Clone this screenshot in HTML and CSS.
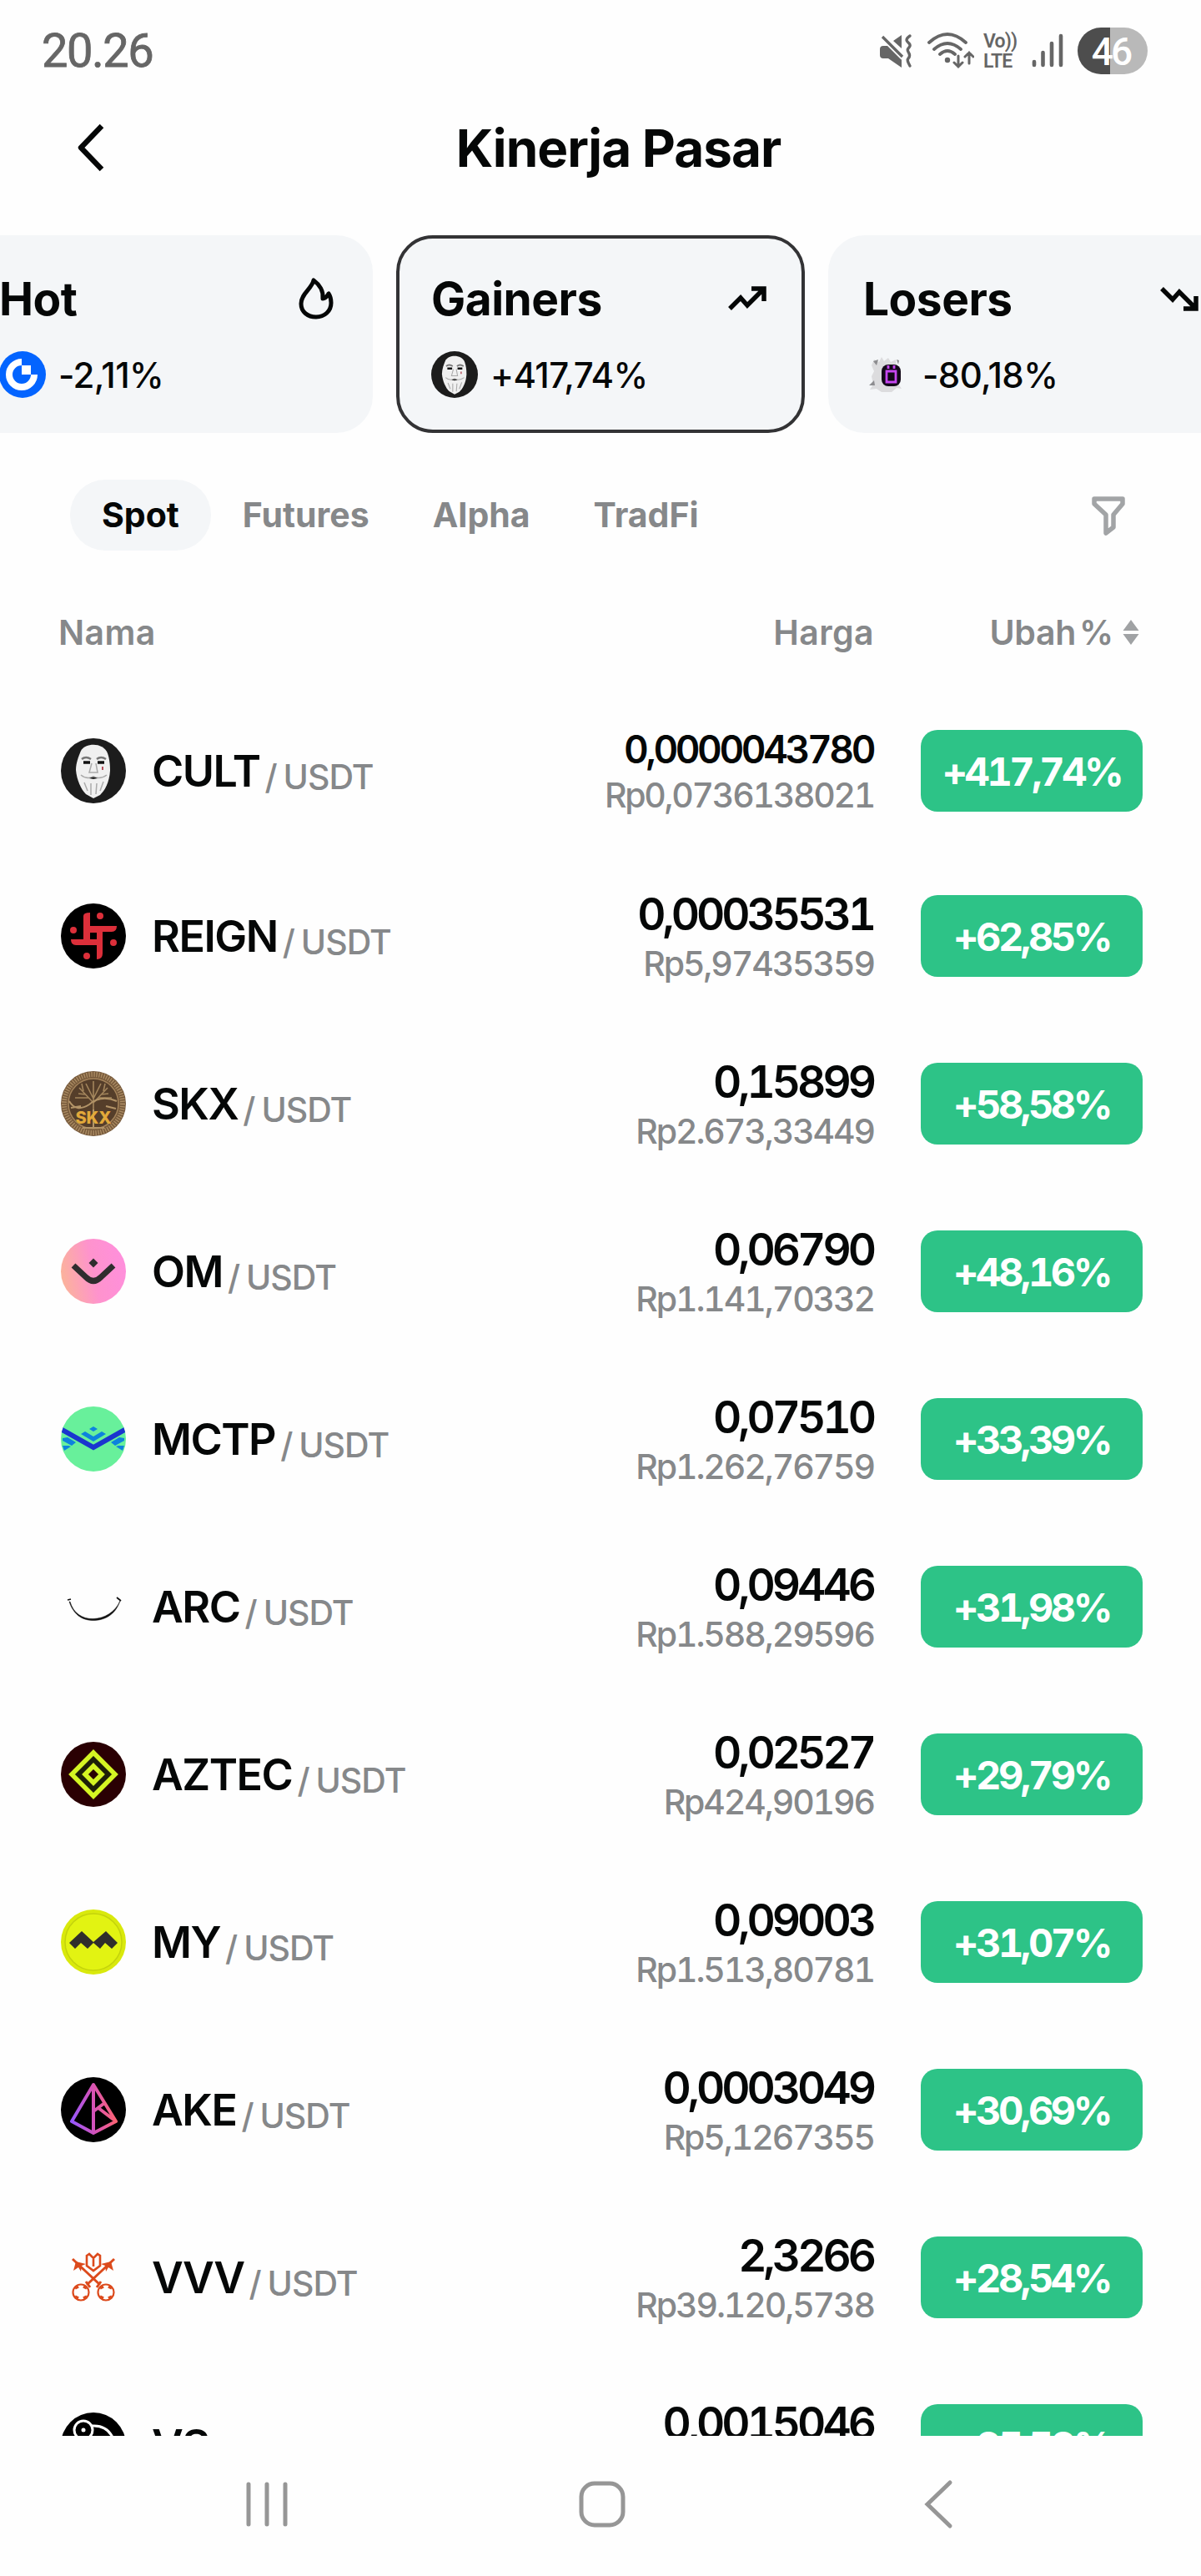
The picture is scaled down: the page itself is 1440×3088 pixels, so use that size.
FILE: index.html
```
<!DOCTYPE html>
<html lang="id">

<head>
    <meta charset="UTF-8">
    <meta name="viewport" content="width=device-width, initial-scale=1.0">
    <title>Kinerja Pasar</title>
    <link rel="stylesheet" href="styles.css">
</head>

<body>

    <!--* Status bar -->
    <div class="status-bar">
        <span class="time">20.26</span>
        <div class="status-icons">
            <svg class="icon-mute" width="42" height="42" viewBox="0 0 42 42" fill="none" stroke="#666" stroke-width="3.4" stroke-linecap="round">
                <path d="M2 19q0-4 4-4h6l16 14v12L12 30H6q-4 0-4-4zM18 9l10-7v16z" fill="#666" stroke="none" />
                <path d="M5 4l24 24" stroke="#fff" stroke-width="7" />
                <path d="M5 4l24 24" stroke-linecap="butt" />
                <path d="M38 3c-7 5-3 7-1 9s1 4-1 6 0 4 1 6 1 4-1 6 0 5 2 9" />
            </svg>
            <svg class="icon-wifi" width="56" height="44" viewBox="0 0 56 44" fill="none" stroke="#666" stroke-width="3.8" stroke-linecap="round">
                <path d="M2 12q22-20 44 0M8 20q16-14 32 0M15 26q9-8 18 0" />
                <circle cx="24" cy="33" r="3.2" fill="#666" stroke="none" />
                <path d="M37 28v13M32 36l5 5 5-5M50 37V24M45 29l5-5 5 5" stroke-width="3" />
            </svg>
            <div class="volte">
                <span>Vo))</span>
                <span>LTE</span>
            </div>
            <svg class="icon-signal" width="38" height="42" viewBox="0 0 38 42" stroke="#666" stroke-width="4.6" stroke-linecap="round">
                <path d="M3 34v4M13.500 23v15M24 12v26M35 3v35" />
            </svg>
            <div class="battery">46</div>
        </div>
    </div>

    <!--* Page header -->
    <header class="header">
        <svg class="back" width="36" height="60" viewBox="0 0 36 60" fill="none" stroke="#050707" stroke-width="6.400" stroke-linejoin="round">
            <path d="M32 3L7 29l25 26" />
        </svg>
        <h1>Kinerja Pasar</h1>
    </header>

    <!--* Category cards -->
    <section class="cards">
        <div class="card">
            <div class="card-head">
                <h2>Hot</h2>
                <svg class="flame" width="44" height="52" viewBox="0 0 44 52" fill="none" stroke="#050707" stroke-width="5" stroke-linejoin="round">
                    <path d="M19 4C17 14 4 20 4 32c0 10 8 16 18 16s18-7 18-17c0-5-1-8-3-11-2 3-3 6-7 6 1-9-4-17-11-22z" />
                </svg>
            </div>
            <div class="card-value">
                <svg width="56" height="56" viewBox="0 0 56 56">
                    <circle cx="28" cy="28" r="28" fill="#0364ff" />
                    <path d="M27 13a15 15 0 1 0 15 15" fill="none" stroke="#fff" stroke-width="8" />
                    <path d="M27 17h11v11H27z" fill="#fff" />
                </svg>
                <span>-2,11%</span>
            </div>
        </div>

        <div class="card active">
            <div class="card-head">
                <h2>Gainers</h2>
                <svg width="46" height="32" viewBox="0 0 46 32" fill="none" stroke="#050707" stroke-width="5.500">
                    <path d="M2 28l13-13 8 9L42 5M28 4h15v15" />
                </svg>
            </div>
            <div class="card-value">
                <svg width="56" height="56" viewBox="0 0 78 78">
                    <use href="#cult" />
                </svg>
                <span>+417,74%</span>
            </div>
        </div>

        <div class="card">
            <div class="card-head">
                <h2>Losers</h2>
                <svg width="46" height="32" viewBox="0 0 46 32" fill="none" stroke="#050707" stroke-width="5.500">
                    <path d="M2 4l13 13 8-9 19 19M28 28h15V13" />
                </svg>
            </div>
            <div class="card-value">
                <svg width="56" height="56" viewBox="0 0 56 56">
                    <path d="M13 10l6 3 3-6 3 5 5-4 3 5 6-3 1 9 4 8-2 12 4 6-6-1-6 5H22l-6-4-8 1 4-6-2-10 3-6-3-7z" fill="#dcdcde" />
                    <path d="M12 12l6-2-2 7zM7 41l6-6 1 6zM40 10l3 1-1 5z" fill="#8d8d90" />
                    <rect x="22" y="16" width="23" height="26" rx="8" fill="#120818" />
                    <path d="M28 24h11v13H28zM30 21v-4M37 21v-4" fill="none" stroke="#c646f0" stroke-width="2.800" />
                </svg>
                <span>-80,18%</span>
            </div>
        </div>
    </section>

    <!--* Tabs -->
    <nav class="tabs">
        <a class="tab active">Spot</a>
        <a class="tab">Futures</a>
        <a class="tab">Alpha</a>
        <a class="tab">TradFi</a>
        <svg class="filter" width="42" height="48" viewBox="0 0 42 48" fill="none" stroke="#a2a4a6" stroke-width="5.500" stroke-linejoin="round">
            <path d="M4 4h34v6L27 23v15l-9 7V23L4 10z" />
        </svg>
    </nav>

    <!--* Market table -->
    <div class="table-head">
        <span>Nama</span>
        <span class="col-price">Harga</span>
        <span class="col-change">Ubah %
            <svg width="20" height="30" viewBox="0 0 20 30" fill="#a0a2a4">
                <path d="M10 0l9.500 13H.5zM10 30L.5 17h19z" />
            </svg>
        </span>
    </div>

    <main class="list">
        <div class="row first">
            <svg class="coin" viewBox="0 0 78 78">
                <g id="cult">
                    <circle cx="39" cy="39" r="39" fill="#1c1c1c" />
                    <path d="M24 15c6-10 27-10 32 3 2 6 3 12 3 21-1 14-6 23-12 29l-8 4-9-5C24 61 19 50 18 38c0-8 3-16 6-23z" fill="#f0f0f0" />
                    <path d="M25 25q5-4 11 0M43 25q5-4 11 0" fill="none" stroke="#777" stroke-width="2.500" />
                    <path d="M27 29h8M44 29h8" stroke="#111" stroke-width="3.500" />
                    <path d="M37 30l-3 11h10l-2-11M24 44q7 6 15 2 8 4 16-2M28 53l4 10M36 54v14M43 54l-1 13M51 52l-4 11" fill="none" stroke="#aaa" stroke-width="1.500" />
                    <path d="M34 48q5-3 10 0l-5 1z" fill="#222" />
                    <path d="M50 34v4" stroke="#b7505c" stroke-width="2" />
                </g>
            </svg>
            <div class="pair">CULT<span>/ USDT</span></div>
            <div class="price">
                <strong>0,0000043780</strong>
                <span>Rp0,0736138021</span>
            </div>
            <div class="change">+417,74%</div>
        </div>

        <div class="row">
            <svg class="coin" viewBox="0 0 78 78">
                <circle cx="39" cy="39" r="39" fill="#000" />
                <path d="M27 15q0-4 8-4v16h32q0 7-6 7H50v26q0 7-7 7V50H18q-6 0-6-7h15zM35 35v8h8v-8z" fill="#dc2f3a" fill-rule="evenodd" />
                <g fill="#dc2f3a">
                    <circle cx="47" cy="15" r="4" />
                    <circle cx="15" cy="32" r="4" />
                    <circle cx="63" cy="47" r="4" />
                    <circle cx="31" cy="63" r="4" />
                </g>
            </svg>
            <div class="pair">REIGN<span>/ USDT</span></div>
            <div class="price">
                <strong>0,00035531</strong>
                <span>Rp5,97435359</span>
            </div>
            <div class="change">+62,85%</div>
        </div>

        <div class="row">
            <svg class="coin" viewBox="0 0 78 78">
                <circle cx="39" cy="39" r="39" fill="#75583a" />
                <circle cx="39" cy="39" r="35" fill="none" stroke="#a98a62" stroke-width="6" stroke-dasharray="1.500 1.500" />
                <circle cx="39" cy="39" r="30" fill="#553e2a" stroke="#a5845b" stroke-width="1.500" />
                <path d="M39 46V12M39 38L22 20M39 38l17-18M39 33L30 15M39 33l9-18M33 32H17M45 32h16M30 28l-9-1M48 28l9-1M27 24l-2-9M51 24l2-9" fill="none" stroke="#a3855c" stroke-width="1.600" />
                <path d="M10 36q8 14 24 4 14-12 33-4M39 46v22M12 44l12-2M54 42l12 3M26 68h26" fill="none" stroke="#b39468" stroke-width="2" />
                <text class="skx" x="39" y="63">SKX</text>
            </svg>
            <div class="pair">SKX<span>/ USDT</span></div>
            <div class="price">
                <strong>0,15899</strong>
                <span>Rp2.673,33449</span>
            </div>
            <div class="change">+58,58%</div>
        </div>

        <div class="row">
            <svg class="coin" viewBox="0 0 78 78">
                <linearGradient id="om" x1="0" y1=".6" x2="1" y2=".4">
                    <stop offset="0" stop-color="#fbb39a" />
                    <stop offset=".5" stop-color="#fe93cd" />
                    <stop offset="1" stop-color="#ff8fdc" />
                </linearGradient>
                <circle cx="39" cy="39" r="39" fill="url(#om)" />
                <path d="M15 32l15 14q9 9 18 0l15-14" fill="none" stroke="#2f2d2e" stroke-width="7" />
                <path d="M39 23.500l5.500 5.500-5.500 5.500-5.500-5.500z" fill="#2f2d2e" />
            </svg>
            <div class="pair">OM<span>/ USDT</span></div>
            <div class="price">
                <strong>0,06790</strong>
                <span>Rp1.141,70332</span>
            </div>
            <div class="change">+48,16%</div>
        </div>

        <div class="row">
            <svg class="coin" viewBox="0 0 78 78">
                <clipPath id="round">
                    <circle cx="39" cy="39" r="39" />
                </clipPath>
                <g clip-path="url(#round)">
                    <path d="M0 0h78v78H0z" fill="#68f09b" />
                    <path d="M0 27l39 22 39-22" fill="none" stroke="#1a35cf" stroke-width="6" />
                    <path d="M39 24l5 3-5 3-5-3zM24 33l5-3 10 6 10-6 5 3-15 9zM2 38l6-1 10 6-5 4L2 41zM76 38l-6-1-10 6 5 4 11-6zM2 47l7 0 3 1-8 5zM76 47h-7l-3 1 8 5z" fill="#0d83dd" />
                </g>
            </svg>
            <div class="pair">MCTP<span>/ USDT</span></div>
            <div class="price">
                <strong>0,07510</strong>
                <span>Rp1.262,76759</span>
            </div>
            <div class="change">+33,39%</div>
        </div>

        <div class="row">
            <svg class="coin" viewBox="0 0 78 78">
                <path d="M10 33c6 18 18 22.500 29 22.500s26-5 32-23.500c-6 14-19 21-32 21.500S15 47 11 33z" fill="#111" stroke="#111" stroke-width=".5" />
                <path d="M8 31l4-1M67 28l5 4" stroke="#111" stroke-width="1.800" />
            </svg>
            <div class="pair">ARC<span>/ USDT</span></div>
            <div class="price">
                <strong>0,09446</strong>
                <span>Rp1.588,29596</span>
            </div>
            <div class="change">+31,98%</div>
        </div>

        <div class="row">
            <svg class="coin" viewBox="0 0 78 78">
                <circle cx="39" cy="39" r="39" fill="#2a0003" />
                <path d="M39 13l26 26-26 26-26-26z" fill="#1d2008" stroke="#d4f523" stroke-width="5.500" />
                <path d="M39 29l10 10-10 10-10-10z" fill="#2a0003" stroke="#d4f523" stroke-width="5.500" />
            </svg>
            <div class="pair">AZTEC<span>/ USDT</span></div>
            <div class="price">
                <strong>0,02527</strong>
                <span>Rp424,90196</span>
            </div>
            <div class="change">+29,79%</div>
        </div>

        <div class="row">
            <svg class="coin" viewBox="0 0 78 78">
                <circle cx="39" cy="39" r="39" fill="#d9e90c" />
                <circle cx="39" cy="39" r="34" fill="#e2f312" stroke="#c3d20c" stroke-width="1.500" />
                <path d="M10 40l15-14 14 13 15-13 14 14-7 7-8-7-6 7-8-7-7 7-8-7-7 7z" fill="#302e2b" />
            </svg>
            <div class="pair">MY<span>/ USDT</span></div>
            <div class="price">
                <strong>0,09003</strong>
                <span>Rp1.513,80781</span>
            </div>
            <div class="change">+31,07%</div>
        </div>

        <div class="row">
            <svg class="coin" viewBox="0 0 78 78">
                <linearGradient id="ake" gradientUnits="userSpaceOnUse" x1="12" y1="50" x2="67" y2="44">
                    <stop offset="0" stop-color="#9558ff" />
                    <stop offset=".5" stop-color="#d452b8" />
                    <stop offset="1" stop-color="#ff6470" />
                </linearGradient>
                <circle cx="39" cy="39" r="39" fill="#000" />
                <path d="M39 9l27 44-27 14-26-14zM39 9v58M39 41l12-9M45 37l21 16" fill="none" stroke="url(#ake)" stroke-width="4" stroke-linejoin="round" />
            </svg>
            <div class="pair">AKE<span>/ USDT</span></div>
            <div class="price">
                <strong>0,0003049</strong>
                <span>Rp5,1267355</span>
            </div>
            <div class="change">+30,69%</div>
        </div>

        <div class="row">
            <svg class="coin" viewBox="0 0 78 78" fill="none" stroke="#dc4a1c" stroke-width="3">
                <path d="M14 17l33 31M64 17L31 48M30 44l5 7M48 44l-5 7" />
                <path d="M18 20l-3 11 6-4 3 5 1-7 5-2zM60 20l3 11-6-4-3 5-1-7-5-2z" fill="#dc4a1c" stroke="none" />
                <path d="M31 13l3-2 5 5 5-5 3 2v12l-8 6-8-6zM39 17v9" stroke-width="2.600" />
                <circle cx="24" cy="57" r="9.500" stroke-width="2.200" />
                <circle cx="54" cy="57" r="9.500" stroke-width="2.200" />
                <path d="M17 52l4-2M27 50l4 2M17 62l4 2M27 64l4-2M47 52l4-2M57 50l4 2M47 62l4 2M57 64l4-2" stroke-width="3.500" />
            </svg>
            <div class="pair">VVV<span>/ USDT</span></div>
            <div class="price">
                <strong>2,3266</strong>
                <span>Rp39.120,5738</span>
            </div>
            <div class="change">+28,54%</div>
        </div>

        <div class="row">
            <svg class="coin" viewBox="0 0 78 78" fill="none" stroke="#fff" stroke-width="3">
                <circle cx="39" cy="39" r="39" fill="#000" stroke="none" />
                <path d="M37 16c14-1 22 6 26 16" />
                <circle cx="27" cy="21" r="11" fill="#000" />
                <circle cx="27" cy="21" r="2.500" fill="#fff" stroke="none" />
            </svg>
            <div class="pair">VS</div>
            <div class="price">
                <strong>0,0015046</strong>
            </div>
            <div class="change">+25,52%</div>
        </div>
    </main>

    <!--* System navigation -->
    <footer class="nav-bar">
        <svg width="56" height="60" viewBox="0 0 56 60" stroke="#969696" stroke-width="5" stroke-linecap="round">
            <path d="M6 6v48M28 6v48M50 6v48" />
        </svg>
        <svg class="home" width="60" height="60" viewBox="0 0 60 60" fill="none" stroke="#969696" stroke-width="5">
            <rect x="5" y="5" width="50" height="50" rx="16" />
        </svg>
        <svg width="40" height="60" viewBox="0 0 40 60" fill="none" stroke="#969696" stroke-width="5" stroke-linecap="round">
            <path d="M34 4L7 30l27 26" />
        </svg>
    </footer>

</body>

</html>
```

FILE: styles.css
```
* {
    box-sizing: border-box;
}

body {
    margin: 0;
    width: 1440px;
    height: 3088px;
    overflow: hidden;
    background-color: #fefefe;
    color: #050707;
    font-family: Inter, "Liberation Sans", sans-serif;
}

h1,
h2 {
    margin: 0;
}

svg {
    display: block;
    flex: none;
}

/* status bar */
.status-bar {
    height: 122px;
    padding: 0 64px 0 50px;
    display: flex;
    align-items: center;
    justify-content: space-between;
    font-family: Roboto, sans-serif;
    color: #666;
}

.time {
    font-size: 56px;
    letter-spacing: -1.5px;
    -webkit-text-stroke: 0.8px #666;
}

.status-icons {
    display: flex;
    align-items: center;
}

.icon-wifi {
    margin-left: 17px;
}

.volte {
    margin-left: 11px;
    width: 42px;
    display: flex;
    flex-direction: column;
    padding-top: 2px;
    font-size: 23px;
    font-weight: 600;
    line-height: 24px;
    letter-spacing: -0.8px;
    white-space: nowrap;
}

.icon-signal {
    margin-left: 16px;
}

.battery {
    margin-left: 17px;
    width: 84px;
    height: 56px;
    padding-right: 4px;
    border-radius: 28px;
    background: linear-gradient(90deg, #4d4d4d 46%, #b9b9b9 46%);
    color: #fff;
    font-size: 46px;
    font-weight: 500;
    line-height: 58px;
    letter-spacing: -3px;
    text-align: center;
}

/* page header */
.header {
    height: 111px;
    padding-left: 90px;
    display: flex;
    align-items: center;
}

.header h1 {
    flex: 1;
    margin-right: 83px;
    text-align: center;
    font-size: 62px;
    font-weight: 700;
    letter-spacing: -1px;
}

/* cards */
.cards {
    display: flex;
    gap: 28px;
    margin-top: 49px;
    margin-left: -43px;
}

.card {
    flex: none;
    width: 490px;
    height: 237px;
    padding: 35px 38px 0;
    border: 4px solid transparent;
    border-radius: 44px;
    background-color: #f4f6f8;
}

.card.active {
    border-color: #333335;
}

.card-head {
    display: flex;
    align-items: center;
    justify-content: space-between;
    height: 74px;
    padding-right: 4px;
}

.card-head h2 {
    font-size: 55px;
    font-weight: 700;
    letter-spacing: -0.5px;
}

.card-value {
    display: flex;
    align-items: center;
    gap: 15px;
    margin-top: 26px;
    height: 56px;
    font-size: 42px;
    font-weight: 500;
    letter-spacing: -0.6px;
}

/* tabs */
.tabs {
    display: flex;
    align-items: center;
    height: 85px;
    margin-top: 56px;
    padding: 0 90px 0 84px;
}

.tab {
    padding: 0 38px;
    line-height: 85px;
    border-radius: 42px;
    font-size: 41px;
    font-weight: 700;
    color: #86888a;
}

.tab.active {
    background-color: #f4f6f8;
    color: #050707;
}

.filter {
    margin-left: auto;
}

/* table */
.table-head {
    display: flex;
    align-items: center;
    height: 105px;
    margin-top: 45px;
    padding: 0 74px 0 70px;
    font-size: 41px;
    font-weight: 600;
    letter-spacing: 0.4px;
    color: #86888a;
}

.col-price {
    flex: 1;
    text-align: right;
}

.col-change {
    width: 318px;
    display: flex;
    align-items: center;
    justify-content: flex-end;
    gap: 11px;
    letter-spacing: -0.3px;
    word-spacing: -6px;
}

.list {
    height: 2096px;
    margin-top: 14px;
    overflow: hidden;
}

.row {
    display: flex;
    align-items: center;
    height: 201px;
    padding: 0 70px 0 73px;
}

.row.first {
    height: 197px;
    padding-top: 3px;
}

.coin {
    width: 78px;
    height: 78px;
}

.pair {
    margin-left: 31px;
    padding-top: 2px;
    font-size: 52px;
    font-weight: 600;
    letter-spacing: -1.5px;
    line-height: 78px;
    white-space: nowrap;
}

.pair span {
    margin-left: 6px;
    font-size: 41px;
    font-weight: 500;
    line-height: 1;
    letter-spacing: -1px;
    word-spacing: -2px;
    vertical-align: -3px;
    color: #86888a;
}

.price {
    flex: 1;
    display: flex;
    flex-direction: column;
    height: 118px;
    padding-top: 3px;
    text-align: right;
    font-variant-numeric: tabular-nums;
}

.price strong {
    padding-right: 1px;
    font-size: 53px;
    font-weight: 600;
    line-height: 60px;
    letter-spacing: -4px;
}

.price span {
    font-size: 41px;
    font-weight: 500;
    line-height: 58px;
    letter-spacing: -2.1px;
    color: #86888a;
}

.first .price {
    height: 110px;
    padding-top: 1px;
}

.first .price strong {
    font-size: 46px;
    line-height: 56px;
    letter-spacing: -3.4px;
}

.first .price span {
    line-height: 54px;
    letter-spacing: -2.3px;
}

.change {
    margin-left: 56px;
    width: 266px;
    height: 98px;
    border-radius: 20px;
    background-color: #2dc387;
    color: #fff;
    font-size: 47px;
    font-weight: 700;
    line-height: 99px;
    letter-spacing: -3.5px;
    font-variant-numeric: tabular-nums;
    text-align: center;
}

.skx {
    font-size: 20px;
    font-weight: 800;
    fill: #e2a93a;
    text-anchor: middle;
}

/* system navigation */
.nav-bar {
    display: flex;
    align-items: center;
    justify-content: space-between;
    height: 168px;
    padding: 0 295px 4px 292px;
}

.home {
    margin-right: 9px;
}
```
